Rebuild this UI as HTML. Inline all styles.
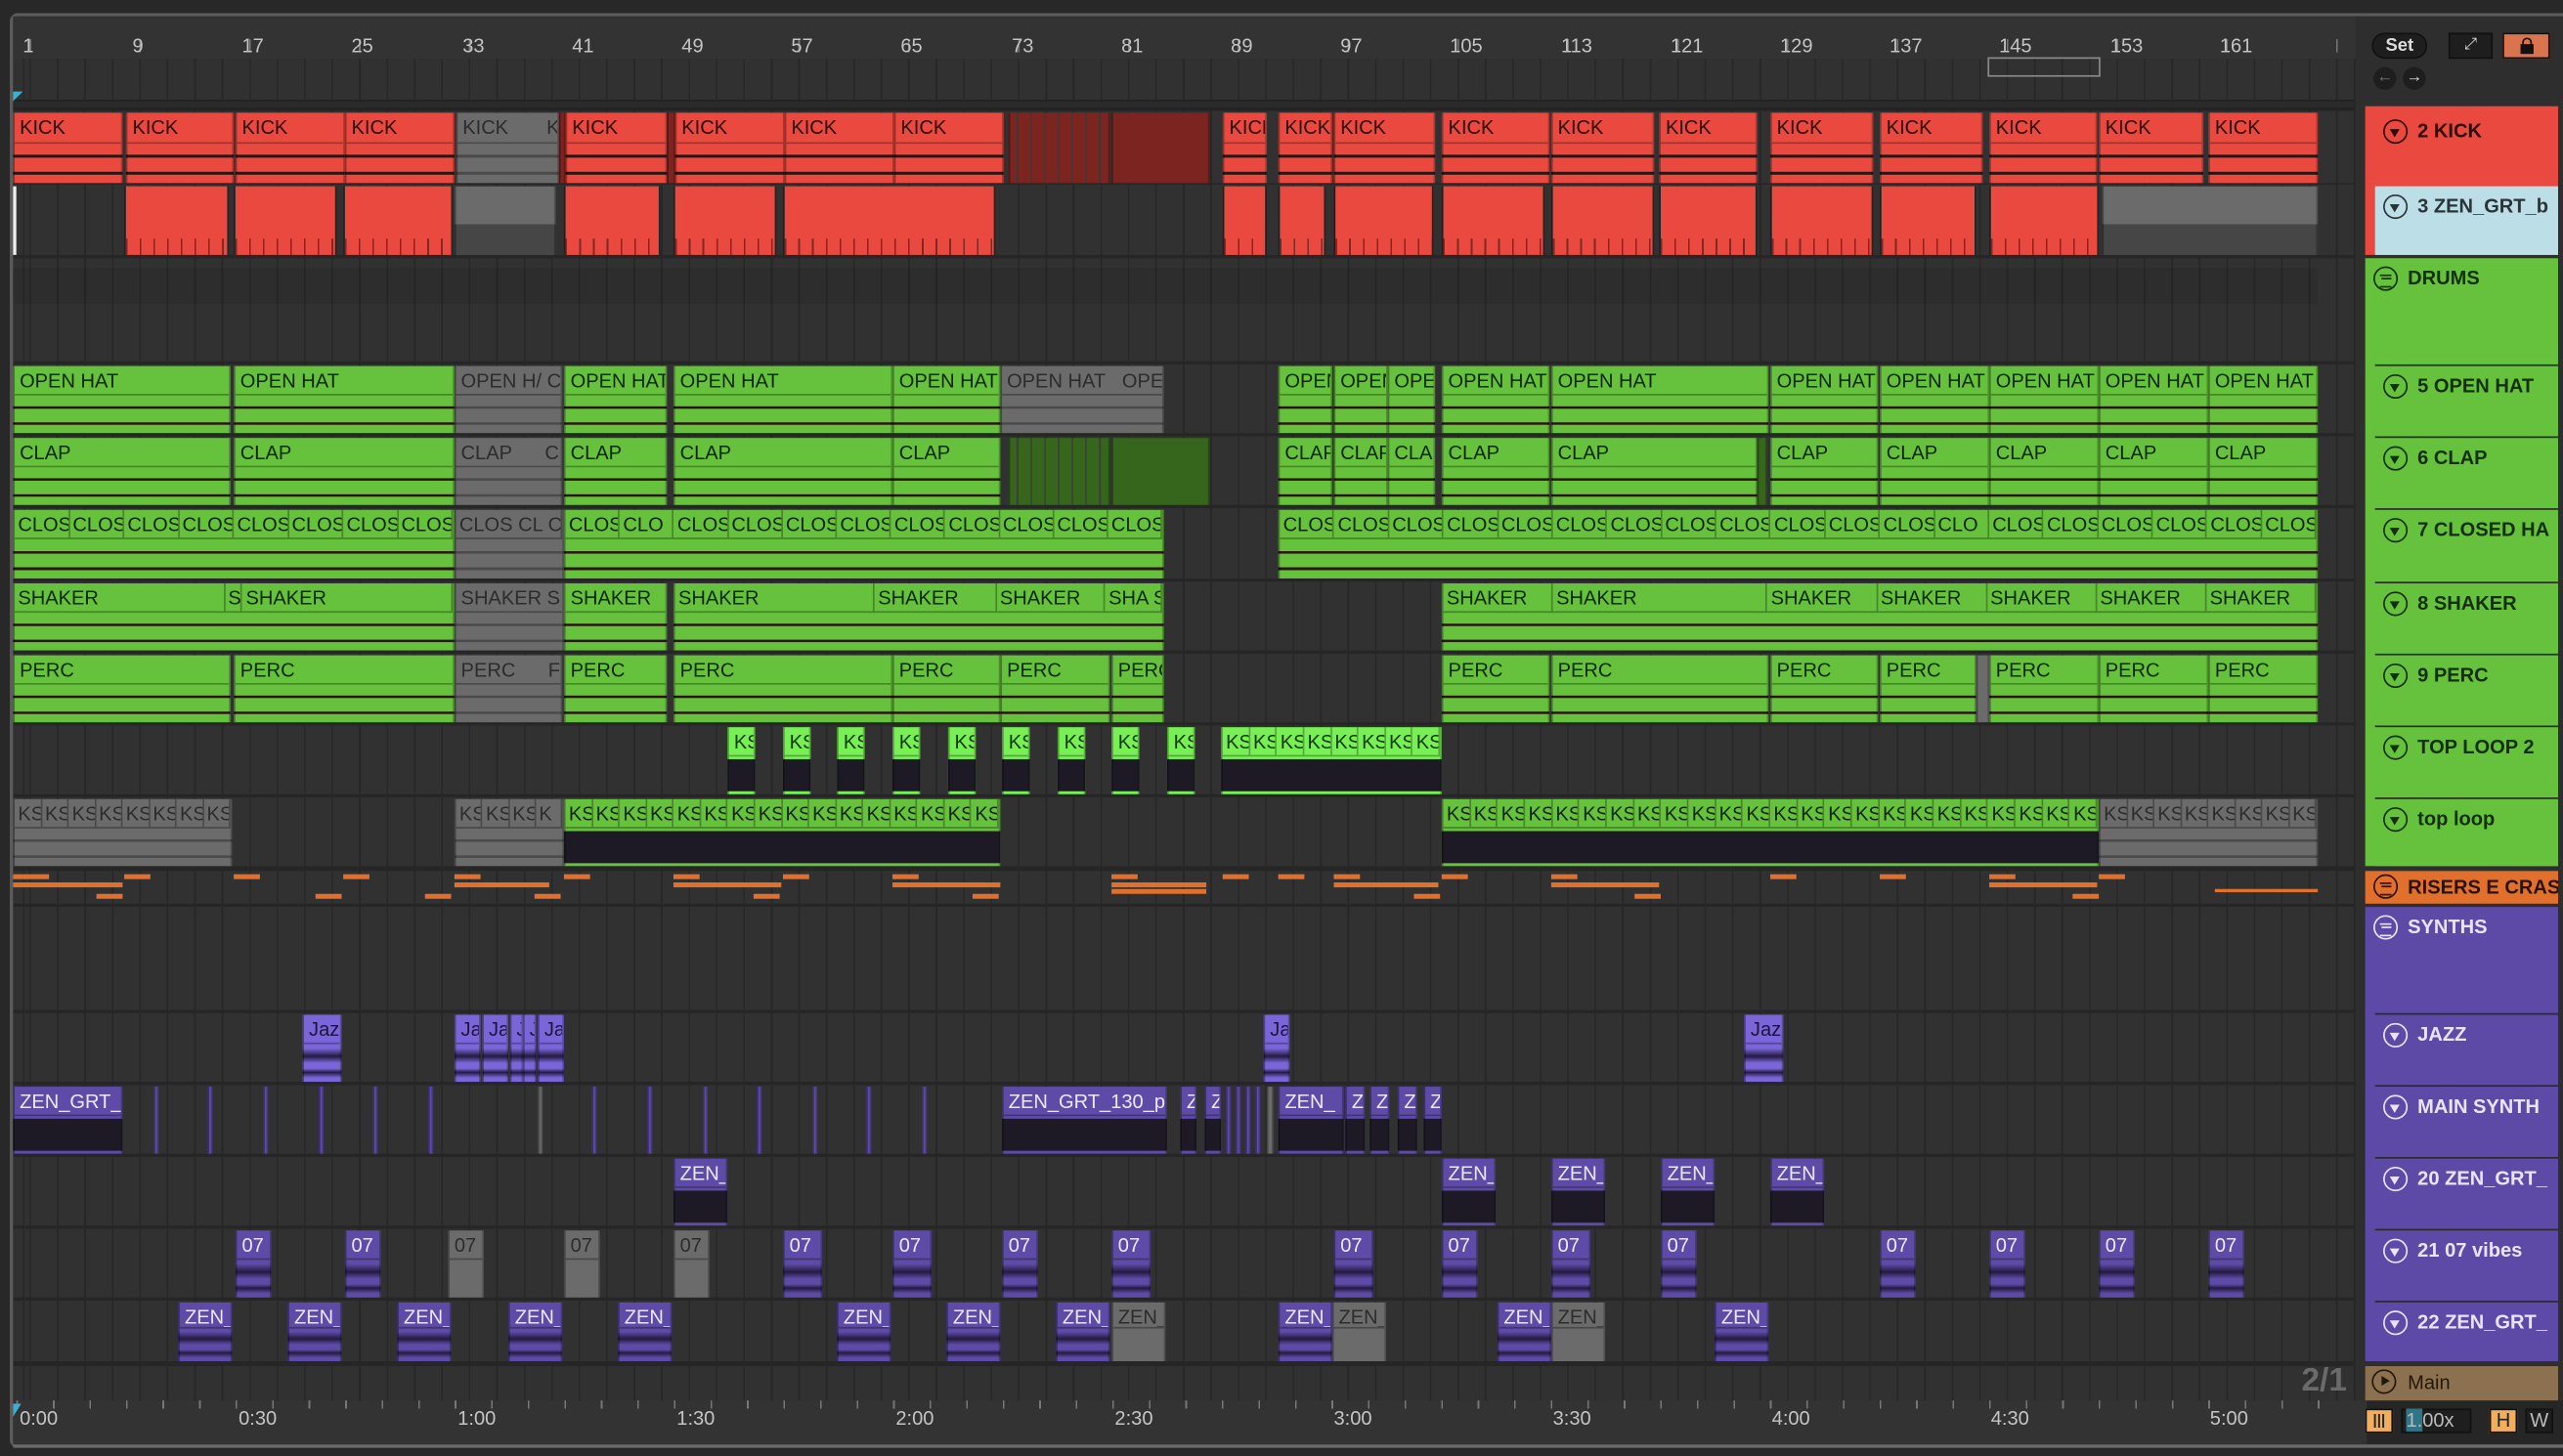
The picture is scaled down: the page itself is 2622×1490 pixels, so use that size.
<!DOCTYPE html>
<html><head><meta charset="utf-8"><style>
*{margin:0;padding:0;box-sizing:border-box}
body{width:2622px;height:1490px;background:#2a2a2a;overflow:hidden;font-family:"Liberation Sans",sans-serif}
#s{position:absolute;left:0;top:0;width:1568px;height:891px;transform:scale(1.67219,1.67228);transform-origin:0 0;background:#282828}
.frame{position:absolute;left:6px;top:8px;width:1562px;height:878px;border:2px solid #5c5c5c;border-right:none;border-radius:5px 0 0 5px;background:#262626}
.ab{position:absolute}
.grid{background:repeating-linear-gradient(90deg,#272727 0 1px,#313131 1px 16.8px);background-position:10px 0}
.r{position:absolute;left:8px;width:1432px}
.r .c{top:1px;height:calc(100% - 1px)}
.c{position:absolute;overflow:hidden;border-left:1px solid rgba(0,0,0,.35);border-right:1px solid rgba(0,0,0,.25)}
.c b,.c i{display:block;height:44%;font:normal 12px/19px "Liberation Sans",sans-serif;padding-left:3px;white-space:nowrap;overflow:hidden;font-style:normal;border-bottom:1px solid rgba(0,0,0,.3)}
.f{display:flex;align-items:flex-start}
.f i{flex:1;border-right:1px solid rgba(0,0,0,.3);padding-left:2px}
.w{background-image:linear-gradient(transparent 60%,#2a1512 60%,#2a1512 64%,transparent 64%,transparent 84%,#2a1512 84%,#2a1512 88%,transparent 88%)}
.R{background-color:#e9493f;color:#2b0d0b}
.G{background-color:#66c13c;color:#0f2607}
.Y{background-color:#6b6b6b;color:#2c2c2c}
.B{background-color:#78ef55;color:#133a08}
.D{background:#7b2420}
.E{background:#35661b}
.P{background-color:#5e4ba7;color:#ece8fb}
.J{background-color:#7b66d9;color:#1d1538}
.pw{background-image:linear-gradient(transparent 48%,#1d1a26 48%,#1d1a26 96%,transparent 96%)}
.pj{background-image:linear-gradient(transparent 50%,#241a40 62%,transparent 72%,transparent 80%,#241a40 86%,transparent 94%)}
.Y.w{background-image:linear-gradient(transparent 60%,#4a4a4a 60%,#4a4a4a 64%,transparent 64%,transparent 84%,#4a4a4a 84%,#4a4a4a 88%,transparent 88%)}
.str{background:repeating-linear-gradient(90deg,#7b2420 0 4px,#3a3a3a 4px 5px,#7b2420 5px 8.4px)}
.strg{background:repeating-linear-gradient(90deg,#35661b 0 4px,#3d3d3d 4px 5px,#35661b 5px 8.4px)}
.tk{background-image:repeating-linear-gradient(90deg,rgba(0,0,0,.45) 0 1px,transparent 1px 8.4px),linear-gradient(#e9493f,#e9493f);background-size:100% 25%,100% 100%;background-repeat:no-repeat;background-position:0 100%,0 0}
.o{position:absolute;height:3px;background:#e2702d}
.lab{position:absolute;font:12px "Liberation Sans",sans-serif;color:#c4c4c4}
.hd{position:absolute;left:1453px;width:112px;font:bold 12px/1 "Liberation Sans",sans-serif;color:#1c1c1c;padding:6px 0 0 26px;white-space:nowrap;overflow:hidden}
.hd .ic{position:absolute;left:5px;top:5px;width:15px;height:15px;border:1.3px solid currentColor;border-radius:50%}
.hd .ic:after{content:"";position:absolute;left:3.2px;top:4.5px;border-left:3.5px solid transparent;border-right:3.5px solid transparent;border-top:5px solid currentColor}
.hd .pl:after{left:4.5px;top:3px;border-top:3.5px solid transparent;border-bottom:3.5px solid transparent;border-left:5px solid currentColor;border-right:0}
.hd.grp{left:1447px;width:118px;padding-left:26px}
.hd .gi:after{content:"";position:absolute;left:3px;top:3.5px;width:7px;height:6px;border:0;border-top:1.3px solid currentColor;border-bottom:1.3px solid currentColor;box-shadow:none}
.hd .gi:before{content:"";position:absolute;left:4px;top:6px;width:6px;height:1.3px;background:currentColor}
.pu{color:#e9e4fb}
</style></head><body><div id="s">
<div class="frame"></div>
<div class="ab" style="left:8px;top:10px;width:1440px;height:26px;background:#333"></div>
<div class="ab grid" style="left:8px;top:36px;width:1432px;height:25px"></div>
<div class="ab" style="left:8px;top:61px;width:1432px;height:6px;background:#2a2a2a;border-top:1px solid #222;border-bottom:1px solid #222"></div>
<div class="ab" style="left:8px;top:10px;width:1432px;height:26px;background:repeating-linear-gradient(90deg,#777 0 1px,transparent 1px 67.2px) 10px 14px/100% 8px no-repeat"></div>
<div class="lab" style="left:14px;top:21px">1</div><div class="lab" style="left:81px;top:21px">9</div><div class="lab" style="left:148px;top:21px">17</div><div class="lab" style="left:215px;top:21px">25</div><div class="lab" style="left:283px;top:21px">33</div><div class="lab" style="left:350px;top:21px">41</div><div class="lab" style="left:417px;top:21px">49</div><div class="lab" style="left:484px;top:21px">57</div><div class="lab" style="left:551px;top:21px">65</div><div class="lab" style="left:619px;top:21px">73</div><div class="lab" style="left:686px;top:21px">81</div><div class="lab" style="left:753px;top:21px">89</div><div class="lab" style="left:820px;top:21px">97</div><div class="lab" style="left:887px;top:21px">105</div><div class="lab" style="left:955px;top:21px">113</div><div class="lab" style="left:1022px;top:21px">121</div><div class="lab" style="left:1089px;top:21px">129</div><div class="lab" style="left:1156px;top:21px">137</div><div class="lab" style="left:1223px;top:21px">145</div><div class="lab" style="left:1291px;top:21px">153</div><div class="lab" style="left:1358px;top:21px">161</div>
<div class="ab" style="left:1216px;top:35px;width:69px;height:12px;border:1px solid #8a8a8a"></div>
<div class="ab" style="left:8px;top:56px;width:0;height:0;border-left:6px solid #3bb0d0;border-bottom:6px solid transparent"></div>

<div class="r grid" style="top:68px;height:44px">
<div class="c R w" style="left:0;width:67px"><b>KICK</b></div>
<div class="c R w" style="left:69px;width:66px"><b>KICK</b></div>
<div class="c R w" style="left:136px;width:67px"><b>KICK</b></div>
<div class="c R w" style="left:203px;width:67px"><b>KICK</b></div>
<div class="c Y w" style="left:271px;width:63px"><b>KICK&nbsp;&nbsp;&nbsp;&nbsp;&nbsp;&nbsp;&nbsp;K</b></div>
<div class="c D" style="left:334px;width:4px"></div>
<div class="c R w" style="left:338px;width:62px"><b>KICK</b></div>
<div class="c D" style="left:400px;width:5px"></div>
<div class="c R w" style="left:405px;width:67px"><b>KICK</b></div>
<div class="c R w" style="left:472px;width:67px"><b>KICK</b></div>
<div class="c R w" style="left:539px;width:67px"><b>KICK</b></div>
<div class="c str" style="left:609px;width:62px"></div>
<div class="c D" style="left:672px;width:60px"></div>
<div class="c R w" style="left:740px;width:27px"><b>KICK</b></div>
<div class="c R w" style="left:774px;width:33px"><b>KICK</b></div>
<div class="c R w" style="left:808px;width:62px"><b>KICK</b></div>
<div class="c R w" style="left:874px;width:66px"><b>KICK</b></div>
<div class="c R w" style="left:941px;width:63px"><b>KICK</b></div>
<div class="c R w" style="left:1007px;width:60px"><b>KICK</b></div>
<div class="c R w" style="left:1075px;width:63px"><b>KICK</b></div>
<div class="c R w" style="left:1142px;width:63px"><b>KICK</b></div>
<div class="c R w" style="left:1209px;width:66px"><b>KICK</b></div>
<div class="c R w" style="left:1276px;width:64px"><b>KICK</b></div>
<div class="c R w" style="left:1343px;width:67px"><b>KICK</b></div>
</div>
<div class="r grid" style="top:113px;height:43px">
<div class="ab" style="left:0;top:1px;width:2px;height:42px;background:#eee"></div>
<div class="c tk" style="left:68px;width:64px"></div>
<div class="c tk" style="left:135px;width:63px"></div>
<div class="c tk" style="left:202px;width:67px"></div>
<div class="c Y" style="left:270px;width:62px;background:linear-gradient(#6b6b6b 55%,#464646 55%)"></div>
<div class="c tk" style="left:337px;width:59px"></div>
<div class="c tk" style="left:404px;width:63px"></div>
<div class="c tk" style="left:471px;width:130px"></div>
<div class="c tk" style="left:740px;width:27px"></div>
<div class="c tk" style="left:774px;width:29px"></div>
<div class="c tk" style="left:808px;width:61px"></div>
<div class="c tk" style="left:874px;width:63px"></div>
<div class="c tk" style="left:941px;width:63px"></div>
<div class="c tk" style="left:1007px;width:60px"></div>
<div class="c tk" style="left:1075px;width:63px"></div>
<div class="c tk" style="left:1142px;width:59px"></div>
<div class="c tk" style="left:1209px;width:67px"></div>
<div class="c Y" style="left:1278px;width:132px;background:linear-gradient(#6b6b6b 55%,#464646 55%)"></div>
</div>
<div class="r grid" style="top:158px;height:63px"><div class="ab" style="left:0;top:6px;width:1410px;height:22px;background:rgba(0,0,0,.07)"></div></div>
<div class="r grid" style="top:223px;height:42px">
<div class="c G w" style="left:0;width:133px"><b>OPEN HAT</b></div>
<div class="c G w" style="left:135px;width:135px"><b>OPEN HAT</b></div>
<div class="c Y w" style="left:270px;width:66px"><b>OPEN H/ C C</b></div>
<div class="c G w" style="left:337px;width:63px"><b>OPEN HAT</b></div>
<div class="c G w" style="left:404px;width:134px"><b>OPEN HAT</b></div>
<div class="c G w" style="left:538px;width:66px"><b>OPEN HAT</b></div>
<div class="c Y w" style="left:604px;width:100px"><b>OPEN HAT&nbsp;&nbsp;&nbsp;OPEN</b></div>
<div class="c G w" style="left:774px;width:33px"><b>OPEN</b></div>
<div class="c G w" style="left:808px;width:33px"><b>OPEN</b></div>
<div class="c G w" style="left:841px;width:29px"><b>OPEN</b></div>
<div class="c G w" style="left:874px;width:66px"><b>OPEN HAT</b></div>
<div class="c G w" style="left:941px;width:133px"><b>OPEN HAT</b></div>
<div class="c G w" style="left:1075px;width:66px"><b>OPEN HAT</b></div>
<div class="c G w" style="left:1142px;width:67px"><b>OPEN HAT</b></div>
<div class="c G w" style="left:1209px;width:67px"><b>OPEN HAT</b></div>
<div class="c G w" style="left:1276px;width:67px"><b>OPEN HAT</b></div>
<div class="c G w" style="left:1343px;width:67px"><b>OPEN HAT</b></div>
</div>
<div class="r grid" style="top:267px;height:42px">
<div class="c G w" style="left:0;width:133px"><b>CLAP</b></div>
<div class="c G w" style="left:135px;width:135px"><b>CLAP</b></div>
<div class="c Y w" style="left:270px;width:66px"><b>CLAP&nbsp;&nbsp;&nbsp;&nbsp;&nbsp;&nbsp;C</b></div>
<div class="c G w" style="left:337px;width:63px"><b>CLAP</b></div>
<div class="c G w" style="left:404px;width:134px"><b>CLAP</b></div>
<div class="c G w" style="left:538px;width:66px"><b>CLAP</b></div>
<div class="c strg" style="left:609px;width:62px"></div>
<div class="c E" style="left:672px;width:60px"></div>
<div class="c G w" style="left:774px;width:33px"><b>CLAP</b></div>
<div class="c G w" style="left:808px;width:33px"><b>CLAP</b></div>
<div class="c G w" style="left:841px;width:29px"><b>CLAP</b></div>
<div class="c G w" style="left:874px;width:66px"><b>CLAP</b></div>
<div class="c G w" style="left:941px;width:126px"><b>CLAP</b></div>
<div class="c E" style="left:1067px;width:6px"></div>
<div class="c G w" style="left:1075px;width:66px"><b>CLAP</b></div>
<div class="c G w" style="left:1142px;width:67px"><b>CLAP</b></div>
<div class="c G w" style="left:1209px;width:67px"><b>CLAP</b></div>
<div class="c G w" style="left:1276px;width:67px"><b>CLAP</b></div>
<div class="c G w" style="left:1343px;width:67px"><b>CLAP</b></div>
</div>
<div class="r grid" style="top:311px;height:43px">
<div class="c G w f" style="left:0;width:270px"><i>CLOS</i><i>CLOS</i><i>CLOS</i><i>CLOS</i><i>CLOS</i><i>CLOS</i><i>CLOS</i><i>CLOS</i></div>
<div class="c Y w f" style="left:270px;width:67px"><i>CLOS CL C</i></div>
<div class="c G w f" style="left:337px;width:367px"><i>CLOS</i><i>CLO</i><i>CLOS</i><i>CLOS</i><i>CLOS</i><i>CLOS</i><i>CLOS</i><i>CLOS</i><i>CLOS</i><i>CLOS</i><i>CLOS</i></div>
<div class="c G w f" style="left:774px;width:636px"><i>CLOS</i><i>CLOS</i><i>CLOS</i><i>CLOS</i><i>CLOS</i><i>CLOS</i><i>CLOS</i><i>CLOS</i><i>CLOS</i><i>CLOS</i><i>CLOS</i><i>CLOS</i><i>CLO</i><i>CLOS</i><i>CLOS</i><i>CLOS</i><i>CLOS</i><i>CLOS</i><i>CLOS</i></div>
</div>
<div class="r grid" style="top:356px;height:42px">
<div class="c G w f" style="left:0;width:270px"><i style="flex:16">SHAKER</i><i style="flex:1">S</i><i style="flex:16">SHAKER</i></div>
<div class="c Y w" style="left:270px;width:67px"><b>SHAKER S S</b></div>
<div class="c G w" style="left:337px;width:63px"><b>SHAKER</b></div>
<div class="c G w f" style="left:404px;width:300px"><i style="flex:15">SHAKER</i><i style="flex:9">SHAKER</i><i style="flex:8">SHAKER</i><i style="flex:4">SHA S</i></div>
<div class="c G w f" style="left:874px;width:536px"><i style="flex:8">SHAKER</i><i style="flex:16">SHAKER</i><i style="flex:8">SHAKER</i><i style="flex:8">SHAKER</i><i style="flex:8">SHAKER</i><i style="flex:8">SHAKER</i><i style="flex:8">SHAKER</i></div>
</div>
<div class="r grid" style="top:400px;height:42px">
<div class="c G w" style="left:0;width:133px"><b>PERC</b></div>
<div class="c G w" style="left:135px;width:135px"><b>PERC</b></div>
<div class="c Y w" style="left:270px;width:66px"><b>PERC&nbsp;&nbsp;&nbsp;&nbsp;&nbsp;&nbsp;F F</b></div>
<div class="c G w" style="left:337px;width:63px"><b>PERC</b></div>
<div class="c G w" style="left:404px;width:134px"><b>PERC</b></div>
<div class="c G w" style="left:538px;width:66px"><b>PERC</b></div>
<div class="c G w" style="left:604px;width:67px"><b>PERC</b></div>
<div class="c G w" style="left:672px;width:32px"><b>PERC</b></div>
<div class="c G w" style="left:874px;width:66px"><b>PERC</b></div>
<div class="c G w" style="left:941px;width:133px"><b>PERC</b></div>
<div class="c G w" style="left:1075px;width:66px"><b>PERC</b></div>
<div class="c G w" style="left:1142px;width:59px"><b>PERC</b></div>
<div class="c Y" style="left:1201px;width:8px"></div>
<div class="c G w" style="left:1209px;width:67px"><b>PERC</b></div>
<div class="c G w" style="left:1276px;width:67px"><b>PERC</b></div>
<div class="c G w" style="left:1343px;width:67px"><b>PERC</b></div>
</div>
<div class="r grid" style="top:444px;height:42px">
<div class="c B pw" style="left:437px;width:17px"><b>KS</b></div>
<div class="c B pw" style="left:471px;width:17px"><b>KS</b></div>
<div class="c B pw" style="left:504px;width:17px"><b>KS</b></div>
<div class="c B pw" style="left:538px;width:17px"><b>KS</b></div>
<div class="c B pw" style="left:572px;width:17px"><b>KS</b></div>
<div class="c B pw" style="left:605px;width:17px"><b>KS</b></div>
<div class="c B pw" style="left:639px;width:17px"><b>KS</b></div>
<div class="c B pw" style="left:672px;width:17px"><b>KS</b></div>
<div class="c B pw" style="left:706px;width:17px"><b>KS</b></div>
<div class="c B pw f" style="left:739px;width:135px"><i>KS</i><i>KS</i><i>KS</i><i>KS</i><i>KS</i><i>KS</i><i>KS</i><i>KS</i></div>
</div>
<div class="r grid" style="top:488px;height:42px">
<div class="c Y w f" style="left:0;width:134px"><i>KS</i><i>KS</i><i>KS</i><i>KS</i><i>KS</i><i>KS</i><i>KS</i><i>KS</i></div>
<div class="c Y w f" style="left:270px;width:67px"><i>KS</i><i>KS</i><i>KS</i><i>K</i></div>
<div class="c G pw f" style="left:337px;width:267px"><i>KS</i><i>KS</i><i>KS</i><i>KS</i><i>KS</i><i>KS</i><i>KS</i><i>KS</i><i>KS</i><i>KS</i><i>KS</i><i>KS</i><i>KS</i><i>KS</i><i>KS</i><i>KS</i></div>
<div class="c G pw f" style="left:874px;width:402px"><i>KS</i><i>KS</i><i>KS</i><i>KS</i><i>KS</i><i>KS</i><i>KS</i><i>KS</i><i>KS</i><i>KS</i><i>KS</i><i>KS</i><i>KS</i><i>KS</i><i>KS</i><i>KS</i><i>KS</i><i>KS</i><i>KS</i><i>KS</i><i>KS</i><i>KS</i><i>KS</i><i>KS</i></div>
<div class="c Y w f" style="left:1276px;width:134px"><i>KS</i><i>KS</i><i>KS</i><i>KS</i><i>KS</i><i>KS</i><i>KS</i><i>KS</i></div>
</div>
<div class="r grid" style="top:533px;height:20px">
<div class="o" style="top:2px;left:0;width:22px"></div><div class="o" style="top:2px;left:68px;width:16px"></div><div class="o" style="top:2px;left:135px;width:16px"></div><div class="o" style="top:2px;left:202px;width:16px"></div><div class="o" style="top:2px;left:270px;width:16px"></div><div class="o" style="top:2px;left:337px;width:16px"></div><div class="o" style="top:2px;left:404px;width:16px"></div><div class="o" style="top:2px;left:471px;width:16px"></div><div class="o" style="top:2px;left:538px;width:16px"></div><div class="o" style="top:2px;left:672px;width:16px"></div><div class="o" style="top:2px;left:740px;width:16px"></div><div class="o" style="top:2px;left:774px;width:16px"></div><div class="o" style="top:2px;left:808px;width:16px"></div><div class="o" style="top:2px;left:874px;width:16px"></div><div class="o" style="top:2px;left:941px;width:16px"></div><div class="o" style="top:2px;left:1075px;width:16px"></div><div class="o" style="top:2px;left:1142px;width:16px"></div><div class="o" style="top:2px;left:1209px;width:16px"></div><div class="o" style="top:2px;left:1276px;width:16px"></div>
<div class="o" style="top:7px;left:0;width:67px"></div><div class="o" style="top:7px;left:270px;width:58px"></div><div class="o" style="top:7px;left:404px;width:66px"></div><div class="o" style="top:7px;left:538px;width:66px"></div><div class="o" style="top:7px;left:672px;width:58px"></div><div class="o" style="top:7px;left:808px;width:64px"></div><div class="o" style="top:7px;left:941px;width:66px"></div><div class="o" style="top:7px;left:1209px;width:66px"></div><div class="o" style="top:11px;left:1347px;width:63px;height:2px"></div>
<div class="o" style="top:14px;left:51px;width:16px"></div><div class="o" style="top:14px;left:185px;width:16px"></div><div class="o" style="top:14px;left:252px;width:16px"></div><div class="o" style="top:14px;left:319px;width:16px"></div><div class="o" style="top:14px;left:453px;width:16px"></div><div class="o" style="top:14px;left:587px;width:16px"></div><div class="o" style="top:11px;left:672px;width:58px"></div><div class="o" style="top:14px;left:857px;width:16px"></div><div class="o" style="top:14px;left:992px;width:16px"></div><div class="o" style="top:14px;left:1260px;width:16px"></div>
</div>
<div class="r grid" style="top:555px;height:63px"></div>
<div class="r grid" style="top:620px;height:42px">
<div class="c J pj" style="left:177px;width:24px"><b>Jazz</b></div>
<div class="c J pj" style="left:270px;width:16px"><b>Ja</b></div>
<div class="c J pj" style="left:287px;width:16px"><b>Ja</b></div>
<div class="c J pj" style="left:304px;width:8px"><b>J</b></div>
<div class="c J pj" style="left:312px;width:8px"><b>J</b></div>
<div class="c J pj" style="left:321px;width:16px"><b>Ja</b></div>
<div class="c J pj" style="left:765px;width:16px"><b>Ja</b></div>
<div class="c J pj" style="left:1059px;width:24px"><b>Jazz</b></div>
</div>
<div class="r grid" style="top:664px;height:42px">
<div class="c P pw" style="left:0;width:67px"><b>ZEN_GRT_1</b></div>
<div class="c P" style="left:86px;width:3px"></div><div class="c P" style="left:119px;width:3px"></div><div class="c P" style="left:153px;width:3px"></div><div class="c P" style="left:187px;width:3px"></div><div class="c P" style="left:220px;width:3px"></div><div class="c P" style="left:254px;width:3px"></div><div class="c Y" style="left:321px;width:3px"></div><div class="c P" style="left:354px;width:3px"></div><div class="c P" style="left:388px;width:3px"></div><div class="c P" style="left:422px;width:3px"></div><div class="c P" style="left:455px;width:3px"></div><div class="c P" style="left:489px;width:3px"></div><div class="c P" style="left:522px;width:3px"></div><div class="c P" style="left:556px;width:3px"></div>
<div class="c P pw" style="left:605px;width:101px"><b>ZEN_GRT_130_p</b></div>
<div class="c P pw" style="left:714px;width:10px"><b>Z</b></div>
<div class="c P pw" style="left:729px;width:10px"><b>Z</b></div>
<div class="c P" style="left:742px;width:3px"></div><div class="c P" style="left:748px;width:3px"></div><div class="c P" style="left:754px;width:3px"></div><div class="c P" style="left:760px;width:3px"></div><div class="c Y" style="left:767px;width:4px"></div>
<div class="c P pw" style="left:774px;width:40px"><b>ZEN_</b></div>
<div class="c P pw" style="left:815px;width:12px"><b>Z</b></div>
<div class="c P pw" style="left:830px;width:12px"><b>Z</b></div>
<div class="c P pw" style="left:847px;width:12px"><b>Z</b></div>
<div class="c P pw" style="left:863px;width:11px"><b>Z</b></div>
</div>
<div class="r grid" style="top:708px;height:42px">
<div class="c P pw" style="left:404px;width:33px"><b>ZEN_</b></div>
<div class="c P pw" style="left:874px;width:33px"><b>ZEN_</b></div>
<div class="c P pw" style="left:941px;width:33px"><b>ZEN_</b></div>
<div class="c P pw" style="left:1008px;width:33px"><b>ZEN_</b></div>
<div class="c P pw" style="left:1075px;width:33px"><b>ZEN_</b></div>
</div>
<div class="r grid" style="top:752px;height:42px">
<div class="c P pj" style="left:136px;width:22px"><b>07</b></div>
<div class="c P pj" style="left:203px;width:22px"><b>07</b></div>
<div class="c Y" style="left:266px;width:22px"><b>07</b></div>
<div class="c Y" style="left:337px;width:22px"><b>07</b></div>
<div class="c Y" style="left:404px;width:22px"><b>07</b></div>
<div class="c P pj" style="left:471px;width:24px"><b>07</b></div>
<div class="c P pj" style="left:538px;width:24px"><b>07</b></div>
<div class="c P pj" style="left:605px;width:22px"><b>07</b></div>
<div class="c P pj" style="left:672px;width:24px"><b>07</b></div>
<div class="c P pj" style="left:808px;width:24px"><b>07</b></div>
<div class="c P pj" style="left:874px;width:22px"><b>07</b></div>
<div class="c P pj" style="left:941px;width:24px"><b>07</b></div>
<div class="c P pj" style="left:1008px;width:22px"><b>07</b></div>
<div class="c P pj" style="left:1142px;width:22px"><b>07</b></div>
<div class="c P pj" style="left:1209px;width:22px"><b>07</b></div>
<div class="c P pj" style="left:1276px;width:22px"><b>07</b></div>
<div class="c P pj" style="left:1343px;width:22px"><b>07</b></div>
</div>
<div class="r grid" style="top:796px;height:37px">
<div class="c P pj" style="left:101px;width:33px"><b>ZEN_</b></div>
<div class="c P pj" style="left:168px;width:33px"><b>ZEN_</b></div>
<div class="c P pj" style="left:235px;width:33px"><b>ZEN_</b></div>
<div class="c P pj" style="left:303px;width:33px"><b>ZEN_</b></div>
<div class="c P pj" style="left:370px;width:33px"><b>ZEN_</b></div>
<div class="c P pj" style="left:504px;width:33px"><b>ZEN_</b></div>
<div class="c P pj" style="left:571px;width:33px"><b>ZEN_</b></div>
<div class="c P pj" style="left:638px;width:33px"><b>ZEN_</b></div>
<div class="c Y" style="left:672px;width:33px"><b>ZEN_</b></div>
<div class="c P pj" style="left:774px;width:33px"><b>ZEN_</b></div>
<div class="c Y" style="left:807px;width:33px"><b>ZEN_</b></div>
<div class="c P pj" style="left:908px;width:33px"><b>ZEN_</b></div>
<div class="c Y" style="left:941px;width:33px"><b>ZEN_</b></div>
<div class="c P pj" style="left:1041px;width:33px"><b>ZEN_</b></div>
</div>
<div class="r grid" style="top:836px;height:21px"></div>
<div class="ab" style="left:1408px;top:834px;font:bold 20px 'Liberation Sans',sans-serif;color:#6a6a6a">2/1</div>
<div class="ab" style="left:8px;top:857px;width:1440px;height:27px;background:#333"></div>
<div class="ab" style="left:10px;top:857px;width:1430px;height:5px;background:repeating-linear-gradient(90deg,#777 0 1px,transparent 1px 22.35px)"></div>
<div class="ab" style="left:8px;top:859px;width:0;height:0;border-left:5px solid #3bb0d0;border-bottom:8px solid transparent"></div>
<div class="lab" style="left:12px;top:861px">0:00</div><div class="lab" style="left:146px;top:861px">0:30</div><div class="lab" style="left:280px;top:861px">1:00</div><div class="lab" style="left:414px;top:861px">1:30</div><div class="lab" style="left:548px;top:861px">2:00</div><div class="lab" style="left:682px;top:861px">2:30</div><div class="lab" style="left:816px;top:861px">3:00</div><div class="lab" style="left:950px;top:861px">3:30</div><div class="lab" style="left:1084px;top:861px">4:00</div><div class="lab" style="left:1218px;top:861px">4:30</div><div class="lab" style="left:1352px;top:861px">5:00</div>
<div class="ab" style="left:8px;top:884px;width:1560px;height:2px;background:#6a6a6a"></div>

<div class="ab" style="left:1441px;top:10px;width:127px;height:847px;background:#2e2e2e"></div>
<div class="ab" style="left:1451px;top:20px;width:34px;height:16px;border-radius:8px;background:#1e1e1e;border:1px solid #111;color:#ddd;font:bold 11px/14px 'Liberation Sans',sans-serif;text-align:center">Set</div>
<div class="ab" style="left:1498px;top:20px;width:27px;height:16px;background:#1e1e1e;border:1px solid #111;color:#ddd;font:10px/14px 'Liberation Sans';text-align:center">⤢</div>
<div class="ab" style="left:1531px;top:20px;width:29px;height:16px;background:#d9744f;border:1px solid #111"><div style="position:absolute;left:10px;top:6px;width:8px;height:6px;background:#111"></div><div style="position:absolute;left:11px;top:2px;width:6px;height:6px;border:1.5px solid #111;border-radius:3px 3px 0 0"></div></div>
<div class="ab" style="left:1452px;top:41px;width:14px;height:14px;border-radius:50%;background:#1e1e1e;color:#777;font:bold 10px/14px sans-serif;text-align:center">←</div>
<div class="ab" style="left:1470px;top:41px;width:14px;height:14px;border-radius:50%;background:#1e1e1e;color:#ddd;font:bold 10px/14px sans-serif;text-align:center">→</div>

<div class="ab" style="left:1447px;top:65px;width:118px;height:91px;background:#e9493f"></div>
<div class="hd" style="top:68px;height:43px;background:#e9493f;color:#2b0c0a"><span class="ic"></span>2 KICK</div>
<div class="hd" style="top:114px;height:42px;background:#bcdee7;color:#2a3438"><span class="ic"></span>3 ZEN_GRT_b</div>
<div class="ab" style="left:1447px;top:158px;width:118px;height:372px;background:#66c13c"></div>
<div class="hd grp" style="top:158px;height:63px;color:#14300a"><span class="ic gi"></span>DRUMS</div>
<div class="hd" style="top:223px;height:42px;background:#66c13c;color:#14300a;border-top:1px solid #2a2a2a"><span class="ic"></span>5 OPEN HAT</div>
<div class="hd" style="top:267px;height:42px;background:#66c13c;color:#14300a;border-top:1px solid #2a2a2a"><span class="ic"></span>6 CLAP</div>
<div class="hd" style="top:311px;height:43px;background:#66c13c;color:#14300a;border-top:1px solid #2a2a2a"><span class="ic"></span>7 CLOSED HA</div>
<div class="hd" style="top:356px;height:42px;background:#66c13c;color:#14300a;border-top:1px solid #2a2a2a"><span class="ic"></span>8 SHAKER</div>
<div class="hd" style="top:400px;height:42px;background:#66c13c;color:#14300a;border-top:1px solid #2a2a2a"><span class="ic"></span>9 PERC</div>
<div class="hd" style="top:444px;height:42px;background:#66c13c;color:#14300a;border-top:1px solid #2a2a2a"><span class="ic"></span>TOP LOOP 2</div>
<div class="hd" style="top:488px;height:42px;background:#66c13c;color:#14300a;border-top:1px solid #2a2a2a"><span class="ic"></span>top loop</div>
<div class="hd grp" style="top:533px;height:20px;padding-top:4px;background:#e2702d;color:#2a1205"><span class="ic gi" style="top:2px"></span>RISERS E CRAS</div>
<div class="ab" style="left:1447px;top:555px;width:118px;height:278px;background:#5d4aa6"></div>
<div class="hd grp pu" style="top:555px;height:63px"><span class="ic gi"></span>SYNTHS</div>
<div class="hd pu" style="top:620px;height:42px;background:#5d4aa6;border-top:1px solid #2a2a2a"><span class="ic"></span>JAZZ</div>
<div class="hd pu" style="top:664px;height:42px;background:#5d4aa6;border-top:1px solid #2a2a2a"><span class="ic"></span>MAIN SYNTH</div>
<div class="hd pu" style="top:708px;height:42px;background:#5d4aa6;border-top:1px solid #2a2a2a"><span class="ic"></span>20 ZEN_GRT_</div>
<div class="hd pu" style="top:752px;height:42px;background:#5d4aa6;border-top:1px solid #2a2a2a"><span class="ic"></span>21 07 vibes</div>
<div class="hd pu" style="top:796px;height:37px;background:#5d4aa6;border-top:1px solid #2a2a2a"><span class="ic"></span>22 ZEN_GRT_</div>
<div class="hd grp" style="top:836px;height:21px;padding-top:4px;background:#8c7150;color:#221808;font-weight:normal"><span class="ic pl" style="top:2px;left:4px"></span>Main</div>

<div class="ab" style="left:1447px;top:862px;width:17px;height:15px;background:#f0ae5e;border:1px solid #111;font:bold 9px/13px sans-serif;color:#222;text-align:center">|||</div>
<div class="ab" style="left:1469px;top:862px;width:43px;height:15px;background:#1e1e1e;border:1px solid #111;font:12px/13px 'Liberation Sans';color:#bbb;padding-left:2px"><span style="background:#2f7585">1.</span>00x</div>
<div class="ab" style="left:1523px;top:862px;width:17px;height:15px;background:#f0ae5e;border:1px solid #111;font:12px/13px 'Liberation Sans';color:#222;text-align:center">H</div>
<div class="ab" style="left:1545px;top:862px;width:17px;height:15px;background:#1e1e1e;border:1px solid #111;font:12px/13px 'Liberation Sans';color:#bbb;text-align:center">W</div>
</div></body></html>
